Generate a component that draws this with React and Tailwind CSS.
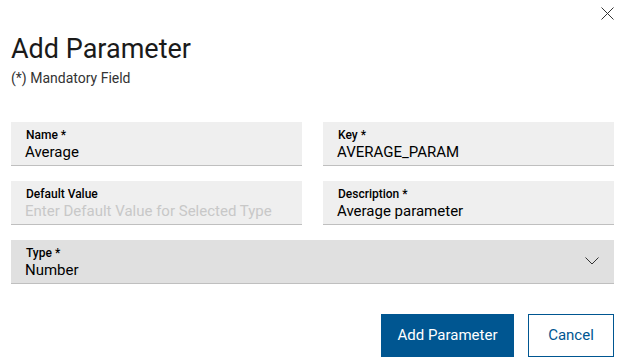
import React from 'react';

const Field = ({ label, value, placeholder, dark, children }) => (
  <div className={`flex items-start border-b border-[#bfbfbf] pl-[15px] pr-[15px] pt-[6px] pb-[3px] h-[44px] ${dark ? 'bg-[#e0e0e0]' : 'bg-[#efefef]'}`}>
    <div className="flex flex-col flex-1 min-w-0">
      <span className="text-[12px] leading-[14px] font-medium text-black">{label}</span>
      {value ? (
        <span className="text-[15px] leading-[20px] text-black -ml-[1px]">{value}</span>
      ) : (
        <span className="text-[15px] leading-[20px] text-[#c8c8c8] -ml-[1px]">{placeholder}</span>
      )}
    </div>
    {children}
  </div>
);

const App = () => {
  return (
    <div className="w-[621px] h-[363px] bg-white relative font-['Roboto',sans-serif] pl-[11px] pr-[7px] overflow-hidden">
      <button className="absolute right-[7px] top-[7px] w-[13px] h-[13px] text-[#333]">
        <svg width="13" height="13" viewBox="0 0 13 13" fill="none" stroke="currentColor" strokeWidth="1">
          <path d="M0.5 0.5 L12.5 12.5 M12.5 0.5 L0.5 12.5" />
        </svg>
      </button>

      <h1 className="pt-[32px] text-[27px] leading-[34px] text-[#1a1a1a] font-normal">Add Parameter</h1>
      <p className="mt-[3px] text-[14px] leading-[18px] text-[#333]">(*) Mandatory Field</p>

      <div className="mt-[35px] grid grid-cols-2 gap-x-[21px] gap-y-[15px]">
        <Field label="Name *" value="Average" />
        <Field label="Key *" value="AVERAGE_PARAM" />
        <Field label="Default Value" placeholder="Enter Default Value for Selected Type" />
        <Field label="Description *" value="Average parameter" />
        <div className="col-span-2">
          <Field label="Type *" value="Number" dark>
            <svg className="mt-[11px]" width="14" height="8" viewBox="0 0 14 8" fill="none" stroke="#333" strokeWidth="1">
              <path d="M0.5 0.5 L7 7 L13.5 0.5" />
            </svg>
          </Field>
        </div>
      </div>

      <div className="mt-[30px] flex justify-end gap-[14px]">
        <button className="h-[43px] w-[133px] bg-[#005691] text-white text-[15px]">Add Parameter</button>
        <button className="h-[43px] w-[86px] border border-[#005691] text-[#005691] text-[15px] bg-white">Cancel</button>
      </div>
    </div>
  );
};

export default App;
